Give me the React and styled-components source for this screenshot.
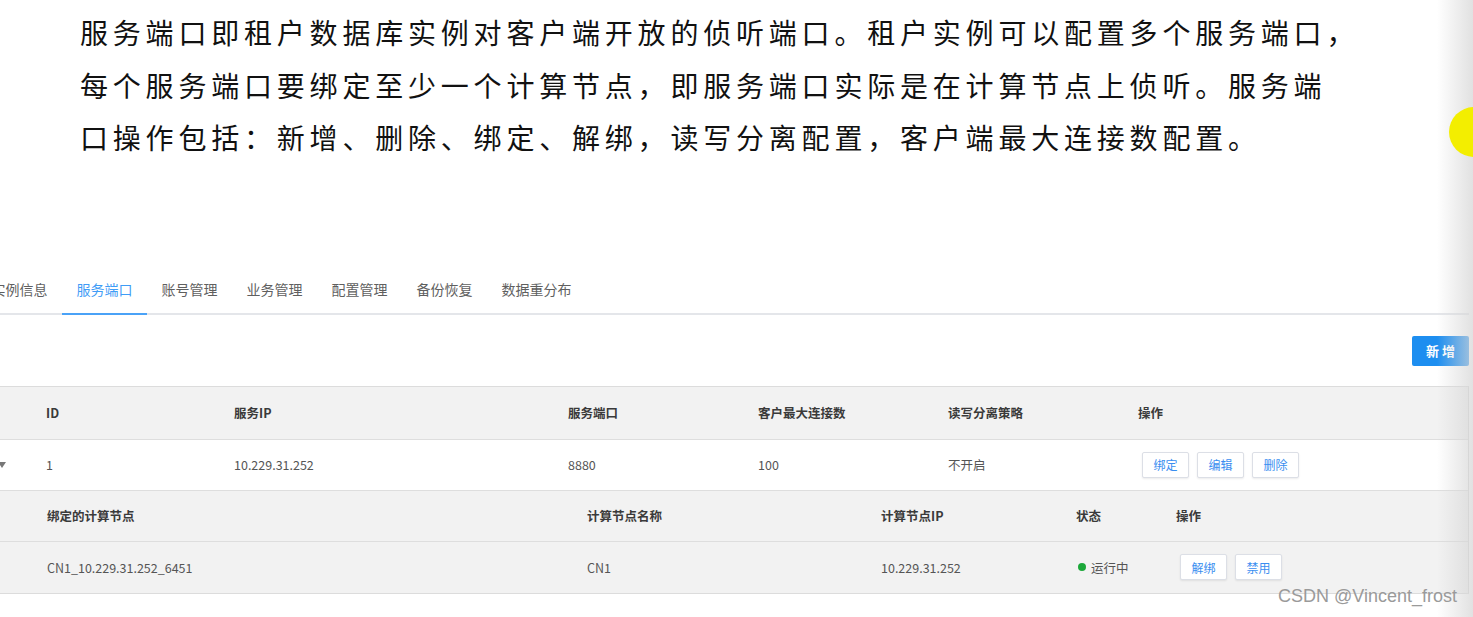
import React from "react";
import styled, { createGlobalStyle } from "styled-components";

const GlobalStyle = createGlobalStyle`
  html, body {
    margin: 0;
    padding: 0;
    background: #ffffff;
  }
  body {
    font-family: "Noto Sans CJK SC", "Noto Sans", sans-serif;
  }
`;

const Page = styled.div`
  position: relative;
  width: 1473px;
  height: 617px;
  overflow: hidden;
  background: #ffffff;
`;

const Paragraph = styled.div`
  padding: 6px 0 0 80px;
  font-size: 28px;
  line-height: 52.5px;
  letter-spacing: 4.8px;
  color: #111111;
`;

const Line = styled.div`
  white-space: nowrap;
`;

const Panel = styled.div`
  margin: 101px 4px 0 -23px;
`;

const Tabs = styled.div`
  display: flex;
  border-bottom: 2px solid #e4e6ea;
`;

const Tab = styled.div`
  height: 48px;
  line-height: 48px;
  padding: 0 14.5px;
  font-size: 14px;
  color: ${(p) => (p.$active ? "#3f9cf6" : "#5f5f5f")};
  border-bottom: 2px solid ${(p) => (p.$active ? "#4aa2f7" : "transparent")};
  margin-bottom: -2px;
  white-space: nowrap;
`;

const Toolbar = styled.div`
  display: flex;
  justify-content: flex-end;
  padding: 21px 0 20px;
`;

const PrimaryButton = styled.button`
  width: 57px;
  height: 30px;
  border: none;
  border-radius: 2px;
  background: #1d8ef0;
  color: #ffffff;
  font-family: inherit;
  font-size: 13px;
  font-weight: bold;
  letter-spacing: 3px;
  padding: 0 0 0 3px;
`;

const Table = styled.div`
  border: 1px solid #dcdcdc;
  border-right-color: #d6d6d6;
`;

const Row = styled.div`
  display: grid;
  grid-template-columns: ${(p) => p.$cols};
  align-items: center;
  height: ${(p) => p.$h || 51}px;
  background: ${(p) => (p.$white ? "#ffffff" : "#f2f2f2")};
  border-top: ${(p) => (p.$first ? "none" : "1px solid #dedede")};
  font-size: 12.5px;
  font-weight: ${(p) => (p.$head ? "bold" : "normal")};
  color: ${(p) => (p.$head ? "#3a3a3a" : "#555555")};
`;

const Cell = styled.div`
  display: flex;
  align-items: center;
  gap: 8px;
  white-space: nowrap;
`;

const Arrow = styled.span`
  margin-left: 20px;
  width: 0;
  height: 0;
  border-left: 4px solid transparent;
  border-right: 4px solid transparent;
  border-top: 6px solid #777777;
`;

const OpButton = styled.button`
  width: 47px;
  height: 26px;
  margin-left: ${(p) => p.$offset || 0}px;
  border: 1px solid #dcdfe6;
  border-radius: 2px;
  background: #ffffff;
  color: #3a8ef0;
  font-family: inherit;
  font-size: 12px;
  padding: 0;
  box-shadow: 0 1px 2px rgba(0, 0, 0, 0.08);
`;

const Dot = styled.span`
  width: 8px;
  height: 8px;
  border-radius: 50%;
  background: #1ca83a;
  margin: 0 -3px 0 2px;
`;

const EdgeShade = styled.div`
  position: absolute;
  top: 0;
  right: 0;
  width: 36px;
  height: 100%;
  background: linear-gradient(to right, rgba(225, 225, 225, 0), rgba(215, 215, 215, 0.75));
  pointer-events: none;
`;

const Cursor = styled.div`
  position: absolute;
  left: 1449px;
  top: 107px;
  width: 50px;
  height: 50px;
  border-radius: 50%;
  background: #f3ee00;
`;

const Watermark = styled.div`
  position: absolute;
  left: 1278px;
  top: 586px;
  font-family: "Liberation Sans", Arial, sans-serif;
  font-size: 18px;
  color: #9a9a9a;
  white-space: nowrap;
`;

const mainCols = "68px 188px 334px 190px 190px 190px 1fr";
const subCols = "69px 540px 294px 195px 100px 1fr";

const tabs = ["实例信息", "服务端口", "账号管理", "业务管理", "配置管理", "备份恢复", "数据重分布"];

const App = () => {
  return (
    <Page>
      <GlobalStyle />
      <Paragraph>
        <Line>服务端口即租户数据库实例对客户端开放的侦听端口。租户实例可以配置多个服务端口，</Line>
        <Line>每个服务端口要绑定至少一个计算节点，即服务端口实际是在计算节点上侦听。服务端</Line>
        <Line>口操作包括：新增、删除、绑定、解绑，读写分离配置，客户端最大连接数配置。</Line>
      </Paragraph>
      <Panel>
        <Tabs>
          {tabs.map((t) => (
            <Tab key={t} $active={t === "服务端口"}>
              {t}
            </Tab>
          ))}
        </Tabs>
        <Toolbar>
          <PrimaryButton>新增</PrimaryButton>
        </Toolbar>
        <Table>
          <Row $cols={mainCols} $head $first $h={52}>
            <Cell />
            <Cell>ID</Cell>
            <Cell>服务IP</Cell>
            <Cell>服务端口</Cell>
            <Cell>客户最大连接数</Cell>
            <Cell>读写分离策略</Cell>
            <Cell>操作</Cell>
          </Row>
          <Row $cols={mainCols} $white $h={50}>
            <Cell>
              <Arrow />
            </Cell>
            <Cell>1</Cell>
            <Cell>10.229.31.252</Cell>
            <Cell>8880</Cell>
            <Cell>100</Cell>
            <Cell>不开启</Cell>
            <Cell>
              <OpButton $offset={4}>绑定</OpButton>
              <OpButton>编辑</OpButton>
              <OpButton>删除</OpButton>
            </Cell>
          </Row>
          <Row $cols={subCols} $head $h={50}>
            <Cell />
            <Cell>绑定的计算节点</Cell>
            <Cell>计算节点名称</Cell>
            <Cell>计算节点IP</Cell>
            <Cell>状态</Cell>
            <Cell>操作</Cell>
          </Row>
          <Row $cols={subCols} $h={51}>
            <Cell />
            <Cell>CN1_10.229.31.252_6451</Cell>
            <Cell>CN1</Cell>
            <Cell>10.229.31.252</Cell>
            <Cell>
              <Dot />
              运行中
            </Cell>
            <Cell>
              <OpButton $offset={4}>解绑</OpButton>
              <OpButton>禁用</OpButton>
            </Cell>
          </Row>
        </Table>
      </Panel>
      <EdgeShade />
      <Cursor />
      <Watermark>CSDN @Vincent_frost</Watermark>
    </Page>
  );
};

export default App;
